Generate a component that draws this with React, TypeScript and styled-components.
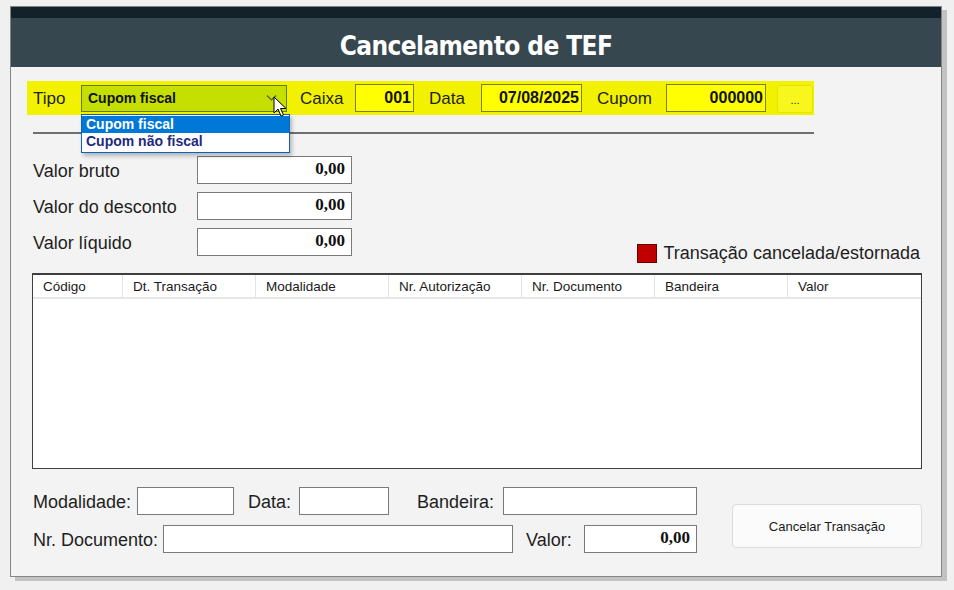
import React from 'react'
import styled, { createGlobalStyle } from 'styled-components'

const GlobalStyle = createGlobalStyle`
    html, body {
        margin: 0;
        padding: 0;
        background: #f0f0f0;
        font-family: 'Liberation Sans', Arial, sans-serif;
    }
    * { box-sizing: border-box; }
`

const Page = styled.div`
    width: 954px;
    height: 590px;
    padding: 6px 0 0 10px;
    overflow: hidden;
`

const Window = styled.div`
    width: 932px;
    height: 571px;
    border: 1px solid #858585;
    background: #f3f3f3;
    box-shadow: 5px 4px 0 #c2c2c2;
    display: flex;
    flex-direction: column;
`

const TopStrip = styled.div`
    height: 11px;
    background: #13212a;
`

const Header = styled.div`
    height: 49px;
    background: #37474f;
    display: flex;
    align-items: center;
    justify-content: center;
    padding-top: 6px;
`

const Title = styled.h1`
    margin: 0;
    color: #ffffff;
    font-family: 'DejaVu Sans Condensed', 'Open Sans', sans-serif;
    font-weight: 700;
    font-size: 26px;
    letter-spacing: -0.6px;
`

const Body = styled.div`
    flex: 1;
    display: flex;
    flex-direction: column;
    padding: 14px 0 0 16px;
`

const Toolbar = styled.div`
    position: relative;
    width: 787px;
    height: 34px;
    background: #f2f200;
    display: flex;
    align-items: center;
    padding-left: 6px;
`

const Label = styled.span<{ $w: number; $ml?: number; $size?: number }>`
    flex: none;
    width: ${(p) => p.$w}px;
    margin-left: ${(p) => p.$ml ?? 0}px;
    padding-top: 2px;
    font-size: ${(p) => p.$size ?? 18}px;
    color: #1e1e1e;
    white-space: nowrap;
`

const ComboWrap = styled.div`
    position: relative;
    flex: none;
`

const Combo = styled.div`
    width: 206px;
    height: 27px;
    background: #c5df00;
    border: 1px solid #5f7d10;
    display: flex;
    align-items: center;
    padding: 0 6px;
    font-size: 14px;
    font-weight: 700;
    color: #111;
    justify-content: space-between;
`

const Chevron = styled.svg`
    width: 11px;
    height: 8px;
    margin-right: 3px;
`

const DropList = styled.ul`
    position: absolute;
    left: 0;
    top: 29px;
    width: 209px;
    margin: 0;
    padding: 1px 0;
    list-style: none;
    background: #ffffff;
    border: 1px solid #0a63c4;
    box-shadow: 2px 3px 4px rgba(0, 0, 0, 0.25);
    z-index: 2;
`

const DropItem = styled.li<{ $active?: boolean }>`
    height: 17.5px;
    line-height: 17.5px;
    padding-left: 4px;
    font-size: 14px;
    font-weight: 700;
    background: ${(p) => (p.$active ? '#0078d7' : 'transparent')};
    color: ${(p) => (p.$active ? '#ffffff' : '#1f2a80')};
`

const Cursor = styled.svg`
    position: absolute;
    left: 192px;
    top: 11px;
    width: 14px;
    height: 22px;
    z-index: 3;
`

const YellowInput = styled.div<{ $w: number }>`
    flex: none;
    width: ${(p) => p.$w}px;
    height: 28px;
    background: #ffff00;
    border: 1px solid #7d7d1a;
    display: flex;
    align-items: center;
    justify-content: flex-end;
    padding-right: 2px;
    font-size: 16px;
    font-weight: 700;
    color: #111;
`

const DotsButton = styled.div`
    flex: none;
    width: 36px;
    height: 28px;
    margin-left: 11px;
    margin-top: 2px;
    background: #f7f71e;
    border: 1px solid #e4e400;
    border-radius: 3px;
    display: flex;
    align-items: flex-end;
    justify-content: center;
    padding-bottom: 6px;
    font-size: 11px;
    color: #333;
`

const Separator = styled.div`
    width: 781px;
    height: 2px;
    margin: 17px 0 0 6px;
    background: #6f6f6f;
`

const TopArea = styled.div`
    width: 893px;
    margin-top: 22px;
    padding-left: 6px;
    display: flex;
    justify-content: space-between;
    align-items: flex-end;
`

const ValueColumn = styled.div`
    display: flex;
    flex-direction: column;
    gap: 8px;
    padding-bottom: 8px;
`

const Row = styled.div`
    display: flex;
    align-items: center;
`

const Field = styled.div<{ $w: number }>`
    flex: none;
    width: ${(p) => p.$w}px;
    height: 28px;
    background: #ffffff;
    border: 1px solid #7a7a7a;
    display: flex;
    align-items: center;
    justify-content: flex-end;
    padding-right: 6px;
    padding-bottom: 2px;
    font-family: 'Liberation Serif', 'Times New Roman', serif;
    font-size: 17px;
    font-weight: 700;
    color: #111;
`

const Legend = styled.div`
    display: flex;
    align-items: center;
    gap: 7px;
    font-size: 18px;
    color: #1e1e1e;
`

const Swatch = styled.span`
    width: 20px;
    height: 19px;
    background: #c00000;
    border: 1px solid #6a0000;
`

const Grid = styled.div`
    width: 890px;
    height: 196px;
    margin: 9px 0 0 5px;
    background: #ffffff;
    border: 1px solid #3f3f3f;
    border-top-width: 2px;
`

const GridHead = styled.div`
    display: flex;
    height: 24px;
    border-bottom: 2px solid #e6e6e6;
`

const HeadCell = styled.div<{ $w?: number }>`
    flex: ${(p) => (p.$w ? 'none' : '1')};
    width: ${(p) => (p.$w ? `${p.$w}px` : 'auto')};
    border-right: 1px solid #e3e3e3;
    padding-left: 10px;
    display: flex;
    align-items: center;
    font-size: 13.5px;
    color: #1a1a1a;
    white-space: nowrap;
    &:last-child { border-right: none; }
`

const Bottom = styled.div`
    margin-top: 18px;
    padding-left: 6px;
    display: flex;
    width: 895px;
`

const BottomFields = styled.div`
    display: flex;
    flex-direction: column;
    gap: 10px;
`

const ActionButton = styled.button`
    margin-left: auto;
    margin-top: 17px;
    width: 190px;
    height: 44px;
    background: #fbfbfb;
    border: 1px solid #dcdcdc;
    border-radius: 4px;
    font-family: 'Liberation Sans', Arial, sans-serif;
    font-size: 13px;
    color: #1a1a1a;
`

const columns: { title: string; w?: number }[] = [
    { title: 'Código', w: 90 },
    { title: 'Dt. Transação', w: 133 },
    { title: 'Modalidade', w: 133 },
    { title: 'Nr. Autorização', w: 133 },
    { title: 'Nr. Documento', w: 133 },
    { title: 'Bandeira', w: 133 },
    { title: 'Valor' },
]

export default function App() {
    return (
        <Page>
            <GlobalStyle />
            <Window>
                <TopStrip />
                <Header>
                    <Title>Cancelamento de TEF</Title>
                </Header>
                <Body>
                    <Toolbar>
                        <Label $w={48} $size={17}>Tipo</Label>
                        <ComboWrap>
                            <Combo>
                                <span>Cupom fiscal</span>
                                <Chevron viewBox="0 0 11 8">
                                    <path d="M1 1.5 L5.5 6 L10 1.5" fill="none" stroke="#55603a" strokeWidth="1.2" />
                                </Chevron>
                            </Combo>
                            <DropList>
                                <DropItem $active>Cupom fiscal</DropItem>
                                <DropItem>Cupom não fiscal</DropItem>
                            </DropList>
                            <Cursor viewBox="0 0 14 22">
                                <path
                                    d="M1 1 L1 17 L5 13 L8 20 L10.5 19 L7.5 12.5 L13 12.5 Z"
                                    fill="#ffffff"
                                    stroke="#000000"
                                    strokeWidth="1"
                                    strokeLinejoin="round"
                                />
                            </Cursor>
                        </ComboWrap>
                        <Label $w={55} $ml={13} $size={17}>Caixa</Label>
                        <YellowInput $w={59}>001</YellowInput>
                        <Label $w={52} $ml={15} $size={17}>Data</Label>
                        <YellowInput $w={101}>07/08/2025</YellowInput>
                        <Label $w={69} $ml={15} $size={17}>Cupom</Label>
                        <YellowInput $w={100}>000000</YellowInput>
                        <DotsButton>...</DotsButton>
                    </Toolbar>
                    <Separator />
                    <TopArea>
                        <ValueColumn>
                            <Row>
                                <Label $w={164}>Valor bruto</Label>
                                <Field $w={155}>0,00</Field>
                            </Row>
                            <Row>
                                <Label $w={164}>Valor do desconto</Label>
                                <Field $w={155}>0,00</Field>
                            </Row>
                            <Row>
                                <Label $w={164}>Valor líquido</Label>
                                <Field $w={155}>0,00</Field>
                            </Row>
                        </ValueColumn>
                        <Legend>
                            <Swatch />
                            Transação cancelada/estornada
                        </Legend>
                    </TopArea>
                    <Grid>
                        <GridHead>
                            {columns.map((c) => (
                                <HeadCell key={c.title} $w={c.w}>
                                    {c.title}
                                </HeadCell>
                            ))}
                        </GridHead>
                    </Grid>
                    <Bottom>
                        <BottomFields>
                            <Row>
                                <Label $w={104}>Modalidade:</Label>
                                <Field $w={97} />
                                <Label $w={51} $ml={14}>Data:</Label>
                                <Field $w={90} />
                                <Label $w={86} $ml={28}>Bandeira:</Label>
                                <Field $w={194} />
                            </Row>
                            <Row>
                                <Label $w={130}>Nr. Documento:</Label>
                                <Field $w={350} />
                                <Label $w={58} $ml={13}>Valor:</Label>
                                <Field $w={113}>0,00</Field>
                            </Row>
                        </BottomFields>
                        <ActionButton>Cancelar Transação</ActionButton>
                    </Bottom>
                </Body>
            </Window>
        </Page>
    )
}
